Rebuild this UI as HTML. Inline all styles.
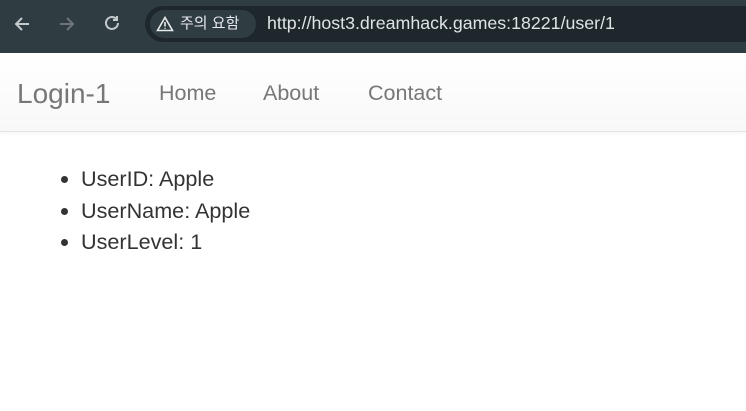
<!DOCTYPE html>
<html><head><meta charset="utf-8"><style>
*{margin:0;padding:0;box-sizing:border-box}
body{width:746px;height:411px;overflow:hidden;background:#fff;font-family:"Liberation Sans",Arial,sans-serif;position:relative}
.bar{position:absolute;left:0;top:0;width:746px;height:53px;background:#2f3c42}
.omni{position:absolute;left:145px;top:6px;width:620px;height:36px;border-radius:18px;background:#1d272c}
.chip{position:absolute;left:150px;top:10px;width:106px;height:28px;border-radius:14px;background:#2f3c42;color:#e8eaed;font-family:"Liberation Sans","Noto Sans CJK KR",sans-serif;font-size:15px;line-height:28px;padding-left:30px}
.url{position:absolute;left:267px;top:13px;color:#dfe3e6;font-size:17.8px}
.nav{position:absolute;left:0;top:53px;width:746px;height:79px;background:linear-gradient(#fff,#f8f8f8);border-bottom:1px solid #e4e4e4;box-shadow:0 1px 4px rgba(0,0,0,.06)}
.nav span{position:absolute;color:#777;top:28px;font-size:21.5px}
.brand{font-size:28px!important;top:25px!important;left:17px}
ul{position:absolute;left:81px;top:163px;font-size:21.6px;color:#333;line-height:31.5px}
</style></head><body>
<div class="bar">
<svg style="position:absolute;left:12px;top:14px" width="20" height="20" viewBox="0 0 20 20" fill="none" stroke="#c4c9cc" stroke-width="2"><path d="M17 10H4M10 4L4 10l6 6"/></svg>
<svg style="position:absolute;left:57px;top:14px" width="20" height="20" viewBox="0 0 20 20" fill="none" stroke="#6d7579" stroke-width="2"><path d="M3 10h13M10 4l6 6-6 6"/></svg>
<svg style="position:absolute;left:102px;top:13px" width="20" height="20" viewBox="0 0 20 20" fill="none" stroke="#c4c9cc" stroke-width="2"><path d="M16 10a6 6 0 1 1-2-4.5"/><path d="M15 3v4h-4" /></svg>
<div class="omni"></div>
<div class="chip">주의 요함</div>
<svg style="position:absolute;left:156px;top:16px" width="18" height="16" viewBox="0 0 18 16" fill="none" stroke="#e8eaed" stroke-width="1.6"><path d="M9 1.5L1.5 14.5h15z"/><path d="M9 6v4.5M9 11.8v1"/></svg>
<div class="url">http://host3.dreamhack.games:18221/user/1</div>
</div>
<div class="nav">
<span class="brand">Login-1</span>
<span style="left:159px">Home</span>
<span style="left:263px">About</span>
<span style="left:368px">Contact</span>
</div>
<ul><li>UserID: Apple</li><li>UserName: Apple</li><li>UserLevel: 1</li></ul>
</body></html>
